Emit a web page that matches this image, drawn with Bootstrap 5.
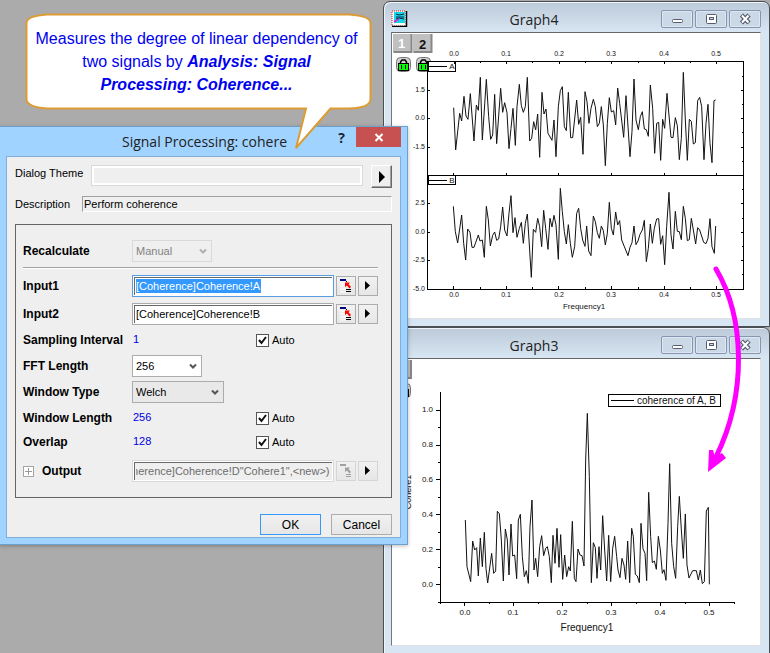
<!DOCTYPE html>
<html lang="en">
<head>
<meta charset="utf-8">
<meta name="viewport" content="width=device-width, initial-scale=1">
<title>Signal Processing: cohere</title>
<link href="https://cdn.jsdelivr.net/npm/bootstrap@5.3.0/dist/css/bootstrap.min.css" rel="stylesheet">
<style>
body{font-family:"Liberation Sans",Arial,sans-serif;font-size:11px;line-height:16px;color:#000;background:#ababab}
.desktop{min-height:100vh;background:#ababab}
.win-title{font-family:"Open Sans","Noto Sans",sans-serif;font-size:14px;line-height:20px;color:#222}
/* graph windows */
.graph-win{position:absolute;left:383px;right:0;border:1px solid #4a4f55;border-radius:7px 7px 0 0;background:linear-gradient(#bccad9,#d8e5f2 30px);padding:0 8px 7px 7px;box-shadow:inset 1px 1px 0 #eef4fa}
.win-one{top:1px}
.win-two{top:327px}
.graph-bar{height:30px;padding-top:8px;position:relative}
.graph-bar .win-title{left:0;right:0;padding-right:84px}
.bar-icon{width:17px;height:17px}
.cap-btn{width:32px;height:18px;padding:0;border:1px solid #8795b3;border-radius:2px;background:#cbd8e6;box-shadow:inset 0 0 0 1px #dde7f1;line-height:0}
.tight{gap:2px}
.client{border:1px solid #e2e2e2;border-top:1px solid #666;border-left:1px solid #777;background:#fff}
.client svg{display:block;width:100%;height:auto}
.plot text{font-family:"Liberation Sans",Arial,sans-serif;fill:#111}
.trace{fill:none;stroke:#111;stroke-width:3;stroke-linejoin:round}
.axis{fill:none;stroke:#000;stroke-width:1;shape-rendering:crispEdges}
/* dialog */
.dialog-win{position:absolute;left:-1px;top:126px;width:409px;background:#a0d3ff;border:1px solid #6f9fcb;padding:0 6px 6px;box-shadow:0 1px 4px #0004}
.dialog-bar{height:29px}
.dialog-bar .win-title{padding:5px 40px 0 0}
.help-btn{border:0;background:none;padding:0;width:29px;height:22px;font:bold 14px/22px "Open Sans",sans-serif;color:#1c2733}
.close-btn{border:0;background:#c75050;padding:0;width:45px;height:20px;line-height:0}
.dialog-body{background:#efefef;border:1px solid #80aed8;padding:8px 8px 2px}
.theme-box{width:272px;height:21px;border:1px solid #d9d9d9;background:#efefef;box-shadow:inset 0 0 0 2px #fff;padding:0 4px}
.theme-btn{width:21px;height:23px;padding:0;border:1px solid #fff;border-right-color:#696969;border-bottom-color:#696969;background:#efefef;box-shadow:inset -1px -1px 0 #a0a0a0;line-height:0}
.desc-box{height:16px;border:1px solid #a0a0a0;border-right-color:#fff;border-bottom-color:#fff;background:#efefef;padding:0 1px}
.params{border:1px solid #646464;padding:15px 13px 15px 7px;margin-top:12px}
.param-row{min-height:22px}
.name-col{width:109px;flex:none;font-weight:bold;font-size:12px}
.split{height:2px;background:#a0a0a0;border-bottom:1px solid #fff;margin:5px 0 6px}
.range-row{gap:2px;margin-bottom:6px}
.range-row .name-col{width:107px}
.range-box{flex:1;min-width:0;height:22px;border:1px solid #ababab;padding:0 3px;background:#fff;box-shadow:inset 0 0 0 1px #fff,inset 2px 2px 0 #696969}
.range-box.picked{border-color:#569de5;color:#fff;background:linear-gradient(#3399ff,#3399ff) 3px 3px/125px 14px no-repeat #fff}
.range-box.off{border-color:#d9d9d9;color:#6d6d6d;background:#efefef}
.tool-btn{width:20px;height:20px;padding:0;border:1px solid #acacac;background:linear-gradient(#f1f1f1,#e6e6e6);line-height:0;flex:none}
.tool-btn.off{border-color:#d5d5d5}
.pick{appearance:none;height:22px;border:1px solid #acacac;color:#000;padding:0 18px 0 3px;background:url("data:image/svg+xml,%3Csvg xmlns='http://www.w3.org/2000/svg' width='8' height='7'%3E%3Cpath d='M1 1.5l3 3 3-3' fill='none' stroke='%23555' stroke-width='2'/%3E%3C/svg%3E") no-repeat right 4px center #fff}
.pick.gray{background-color:#e9e9e9;width:92px}
.pick.short{width:70px}
.pick:disabled{width:80px;border-color:#d9d9d9;color:#838383;background-color:#efefef;opacity:1;background-image:url("data:image/svg+xml,%3Csvg xmlns='http://www.w3.org/2000/svg' width='8' height='7'%3E%3Cpath d='M1 1.5l3 3 3-3' fill='none' stroke='%23b0b0b0' stroke-width='2'/%3E%3C/svg%3E")}
.value-col{width:124px;color:#0000e0;line-height:20px;padding-left:1px;height:22px}
.tick{appearance:none;width:13px;height:13px;border:1px solid #555;background:#fff;margin:0 3px 0 0}
.tick:checked{background:url("data:image/svg+xml,%3Csvg xmlns='http://www.w3.org/2000/svg' width='11' height='11'%3E%3Cpath d='M2 5l2.500 3 4.500-6' fill='none' stroke='%23111' stroke-width='2'/%3E%3C/svg%3E") center no-repeat #fff}
.expand-btn{width:11px;height:11px;padding:0;border:1px solid #a5a5a5;background:#fff;line-height:0}
.overlap-row{margin:2px 0 7px}
.end-btns{gap:10px;padding-top:16px;padding-bottom:0}
.end-btn{width:61px;height:21px;padding:0;border:1px solid #acacac;background:linear-gradient(#f1f1f1,#e6e6e6);font-size:12px;line-height:18px;color:#000}
.end-btn.main{border-color:#3399ff}
/* overlays */
.callout{position:absolute;left:25px;top:13px;width:347px;height:137px;padding:14px 8px 0 4px;color:#0000f0;font-size:16px;line-height:23px;z-index:3}
.callout svg{position:absolute;left:0;top:0;z-index:-1}
.flow-arrow{position:absolute;left:700px;top:260px;z-index:3;pointer-events:none}
</style>
<script src="https://cdn.jsdelivr.net/npm/bootstrap@5.3.0/dist/js/bootstrap.bundle.min.js"></script>
</head>
<body>
<svg width="0" height="0" class="position-absolute" aria-hidden="true">
  <defs>
    <g id="g-min"><rect x="10.500" y="8.500" width="10" height="3" rx="1" fill="#fff" stroke="#555b70"/></g>
    <g id="g-max"><rect x="10.500" y="3.500" width="10" height="9" rx="1" fill="#fff" stroke="#555b70"/><rect x="13.500" y="6.500" width="4" height="2" fill="#cbd8e6" stroke="#555b70"/></g>
    <g id="g-close"><path d="M11.500 4l7.500 8M19 4l-7.500 8" stroke="#555b70" stroke-width="4.500"/><path d="M12 4.500l6.500 7M18.500 4.500l-6.500 7" stroke="#fff" stroke-width="2"/></g>
    <g id="g-play"><path d="M6 4v9l5-4.500z"/></g>
    <g id="g-lock"><rect x=".5" y=".5" width="14" height="14" rx="4" fill="#d0d0d0" stroke="#777"/><path d="M4.500 7V5l1.500-2h3l1.500 2v2" fill="none" stroke="#000" stroke-width="1.500"/><rect x="2.500" y="6.500" width="10" height="7" fill="#0f0" stroke="#000"/><path d="M5.500 8v4M9.500 8v4" stroke="#000"/></g>
    <g id="g-pick"><path d="M3 2h6v2H3z" fill="#000080"/><path d="M3 6h6M3 9h6M3 12h6M3 15h6" stroke="#fff"/><path d="M9 4.500h1" stroke="#000"/><path d="M8 5.500h5L11.500 7l2.500 3-1.500 1.500L10 8.500 8 10z" fill="#f00"/><path d="M9 12.500h5M9 14.500h5" stroke="#000"/></g>
    <g id="g-pick-off"><path d="M3 2h6v2H3z"/><path d="M8 5.500h5L11.500 7l2.500 3-1.500 1.500L10 8.500 8 10z"/><path d="M9 12.500h5M9 14.500h5" stroke="#a0a0a0"/></g>
  </defs>
</svg>
<main class="desktop position-relative overflow-hidden">

<section class="graph-win win-one">
  <header class="graph-bar d-flex justify-content-between align-items-start">
    <svg class="bar-icon" viewBox="0 0 17 17"><path d="M1 1h14v15H1z" fill="#fff" stroke="#c22" stroke-dasharray="1 1"/><path d="M3 2h11v11H3z" fill="#14d8e8"/><path d="M5 4l3 1 5-1M5 7h8M5 9l3-1 5 1" fill="none" stroke="#124"/><path d="M3 12l5-3" stroke="#d2c" stroke-width="1.500"/><path d="M15.500 1v15.500H1" fill="none" stroke="#000" stroke-width="1.500"/></svg>
    <span class="win-title position-absolute text-center pe-none">Graph4</span>
    <div class="d-flex tight position-relative">
      <button type="button" class="cap-btn" aria-label="Minimize"><svg width="30" height="16"><use href="#g-min"/></svg></button>
      <button type="button" class="cap-btn" aria-label="Restore"><svg width="30" height="16"><use href="#g-max"/></svg></button>
      <button type="button" class="cap-btn" aria-label="Close"><svg width="30" height="16"><use href="#g-close"/></svg></button>
    </div>
  </header>
  <div class="client">
  <svg class="plot" viewBox="392 33 368 285" role="img" aria-label="Signals A and B">
    <path d="M393 34h19v18h-19zM413 34h19v18h-19z" fill="#c0c0c0"/><path d="M411.500 34v18h-18M431.500 34v18h-18" fill="none" stroke="#888" stroke-width="2"/>
    <text x="398" y="48" font-size="13" font-weight="bold" style="fill:#fff">1</text><text x="419" y="49" font-size="13" font-weight="bold">2</text>
    <use href="#g-lock" x="396" y="57"/><use href="#g-lock" x="416" y="57"/>
    <rect x="428.500" y="61.500" width="27" height="10" fill="#fff" stroke="#000"/>
    <rect x="428.500" y="175.500" width="27" height="9" fill="#fff" stroke="#000"/>
    <path class="axis" d="M427.500 61.500H743.500V289.500H427.500zM427.500 175.500H743.500M429 66.500h18M429 180.500h18"/>
    <path class="axis" d="M454.500 62v2M480.500 62v1M506.500 62v2M532.500 62v1M559.500 62v2M585.500 62v1M611.500 62v2M638.500 62v1M664.500 62v2M690.500 62v1M716.500 62v2M453.500 175v-2M506.500 175v-2M558.500 175v-2M611.500 175v-2M664.500 175v-2M716.500 175v-2M453.500 289v-3M480.500 289v-2M506.500 289v-3M532.500 289v-2M558.500 289v-3M585.500 289v-2M611.500 289v-3M638.500 289v-2M664.500 289v-3M690.500 289v-2M716.500 289v-3"/>
    <path class="axis" d="M428 90.500h2M428 118.500h2M428 147.500h2M428 203.500h2M428 232.500h2M428 260.500h2M743 76.500h-1M743 90.500h-2M743 104.500h-1M743 118.500h-2M743 132.500h-1M743 147.500h-2M743 161.500h-1M743 189.500h-1M743 203.500h-2M743 218.500h-1M743 232.500h-2M743 246.500h-1M743 260.500h-2M743 274.500h-1"/>
    <g font-size="7" text-anchor="middle">
      <text x="454" y="56">0.0</text><text x="506" y="56">0.1</text><text x="559" y="56">0.2</text><text x="611" y="56">0.3</text><text x="664" y="56">0.4</text><text x="716" y="56">0.5</text>
      <text x="454" y="297">0.0</text><text x="506" y="297">0.1</text><text x="559" y="297">0.2</text><text x="611" y="297">0.3</text><text x="664" y="297">0.4</text><text x="716" y="297">0.5</text>
      <text x="452" y="69" font-size="8">A</text><text x="452" y="183" font-size="8">B</text>
      <text x="584" y="309" font-size="8">Frequency1</text>
    </g>
    <g font-size="7" text-anchor="end">
      <text x="425" y="92">1.5</text><text x="425" y="120">0.0</text><text x="425" y="149">-1.5</text>
      <text x="425" y="205">2.5</text><text x="425" y="234">0.0</text><text x="425" y="262">-2.5</text><text x="425" y="291">-5.0</text>
    </g>
    <g transform="translate(410 60) scale(.33333)"><polyline class="trace" points="131,143 137,270 149,160 155,183 162,109 168,168 174,178 181,101 192,243 199,135 205,151 211,52 217,240 229,58 236,170 242,238 248,225 254,103 260,251 272,85 278,157 284,128 291,158 297,266 303,205 309,145 316,256 321,140 328,73 334,137 340,157 346,140 352,52 359,243 365,235 371,185 377,210 383,162 389,292 396,97 402,162 408,147 414,220 426,241 432,180 438,290 445,140 451,92 457,80 463,200 469,212 475,97 482,233 488,233 500,120 506,193 512,172 519,283 525,95 531,125 537,190 543,145 550,118 556,140 562,200 568,190 574,140 580,195 586,317 592,190 598,113 604,156 611,152 617,195 623,84 629,130 641,232 648,107 660,290 666,215 672,57 678,180 685,209 691,170 697,155 703,207 709,209 715,229 721,75 728,145 734,280 740,190 746,187 752,301 758,178 764,205 771,100 783,232 789,233 796,173 802,197 808,299 814,235 820,37 826,180 832,301 838,178 844,184 850,252 856,248 863,122 869,112 875,140 882,299 888,190 894,133 900,250 906,308 912,122 917,120"/></g>
    <g transform="translate(400 170) scale(.33333)"><polyline class="trace" points="160,109 166,185 173,219 185,135 191,220 197,270 203,177 210,187 216,232 222,232 235,195 240,213 247,210 253,262 259,109 265,150 271,228 278,196 284,186 290,211 296,207 302,170 308,111 314,180 321,198 327,130 333,77 339,188 345,143 351,202 358,175 364,157 370,220 376,160 382,132 388,225 394,322 400,178 407,187 413,145 419,170 425,230 431,121 437,175 444,238 450,145 456,171 462,136 468,165 475,268 481,55 487,125 493,185 499,222 505,164 511,220 517,262 524,230 530,130 536,115 542,175 548,210 555,229 560,168 566,243 573,257 580,138 586,155 592,188 598,205 604,168 610,182 616,225 622,190 628,97 634,175 640,195 647,126 653,165 659,152 665,210 684,257 690,232 696,218 702,168 708,224 714,213 720,193 727,180 733,151 739,275 745,235 751,162 757,220 763,175 770,147 776,146 782,223 788,197 794,284 800,170 807,67 813,195 819,237 826,124 832,184 838,185 844,209 850,109 856,145 862,212 868,209 874,145 880,180 887,222 893,173 899,180 911,217 918,221 924,205 930,146 936,230 943,250 947,168"/></g>
  </svg>
  </div>
</section>

<section class="graph-win win-two">
  <header class="graph-bar d-flex justify-content-end align-items-start">
    <span class="win-title position-absolute text-center pe-none">Graph3</span>
    <div class="d-flex tight position-relative">
      <button type="button" class="cap-btn" aria-label="Minimize"><svg width="30" height="16"><use href="#g-min"/></svg></button>
      <button type="button" class="cap-btn" aria-label="Restore"><svg width="30" height="16"><use href="#g-max"/></svg></button>
      <button type="button" class="cap-btn" aria-label="Close"><svg width="30" height="16"><use href="#g-close"/></svg></button>
    </div>
  </header>
  <div class="client">
  <svg class="plot" viewBox="392 359 368 286" role="img" aria-label="Coherence of A and B">
    <path d="M393 360h19v18h-19z" fill="#c0c0c0"/><path d="M411 360v18h-18" fill="none" stroke="#888" stroke-width="2"/>
    <use href="#g-lock" x="396" y="383"/>
    <path class="axis" d="M440.500 392V602.500H735M440 410.500h-4M440 445.500h-4M440 479.500h-4M440 514.500h-4M440 549.500h-4M440 584.500h-4M440 427.500h-2M440 462.500h-2M440 497.500h-2M440 532.500h-2M440 567.500h-2M440 602.500h-2"/>
    <path class="axis" d="M440.500 602v2M464.500 602v4M489.500 602v2M513.500 602v4M538.500 602v2M562.500 602v4M587.500 602v2M611.500 602v4M636.500 602v2M660.500 602v4M685.500 602v2M709.500 602v4M734.500 602v2"/>
    <rect x="608.500" y="394.500" width="112" height="12" fill="#fff" stroke="#000"/><path class="axis" d="M611 400.500h23"/>
    <text x="637" y="404" font-size="10">coherence of A, B</text>
    <g font-size="8" text-anchor="middle">
      <text x="465" y="615">0.0</text><text x="513" y="615">0.1</text><text x="562" y="615">0.2</text><text x="611" y="615">0.3</text><text x="660" y="615">0.4</text><text x="709" y="615">0.5</text>
      <text x="587" y="631" font-size="10">Frequency1</text>
      <text transform="translate(411 492) rotate(-90)" font-size="9">Cohere1</text>
    </g>
    <g font-size="8" text-anchor="end">
      <text x="433" y="412">1.0</text><text x="433" y="447">0.8</text><text x="433" y="482">0.6</text><text x="433" y="517">0.4</text><text x="433" y="552">0.2</text><text x="433" y="587">0.0</text>
    </g>
    <g transform="translate(380 310) scale(.33333)"><polyline class="trace" points="256,630 261,770 272,815 278,693 284,720 290,713 295,798 301,684 307,770 313,667 318,775 323,819 335,730 341,790 347,783 352,604 358,611 364,690 370,813 376,657 382,690 387,795 393,642 398,738 404,735 410,806 415,630 421,613 427,740 433,800 439,782 445,820 450,650 456,570 462,780 467,745 473,800 479,710 485,677 491,737 497,715 502,710 508,740 514,818 519,676 525,760 531,655 537,772 542,674 548,808 554,735 560,800 566,770 571,783 577,634 583,805 588,815 594,717 600,735 606,737 612,768 617,450 622,310 628,500 634,818 640,698 646,713 651,805 657,710 662,780 668,617 674,720 680,813 686,676 692,815 698,715 704,679 710,740 714,780 720,803 726,745 732,765 737,808 743,693 749,818 755,655 760,680 766,793 772,798 778,818 783,640 789,716 795,730 800,812 806,547 812,680 817,758 823,753 829,778 835,679 841,720 847,790 852,779 858,811 864,640 869,461 875,700 881,770 887,805 893,650 898,559 904,660 910,745 916,612 921,765 927,804 938,782 949,782 955,810 961,780 967,821 973,815 979,603 985,592 988,823"/></g>
  </svg>
  </div>
</section>

<section class="dialog-win" role="dialog" aria-labelledby="dlg-title">
  <header class="dialog-bar d-flex align-items-start">
    <span id="dlg-title" class="win-title flex-fill text-end">Signal Processing: cohere</span>
    <button type="button" class="help-btn" aria-label="Help">?</button>
    <button type="button" class="close-btn" aria-label="Close"><svg width="45" height="20"><path d="M19.500 7l7 7M26.500 7l-7 7" stroke="#fff" stroke-width="2"/></svg></button>
  </header>
  <form class="dialog-body">
    <div class="d-flex align-items-start">
      <label for="theme" class="flex-fill">Dialog Theme</label>
      <input id="theme" class="theme-box me-2" readonly>
      <button type="button" class="theme-btn" aria-label="Theme menu"><svg width="19" height="21"><path d="M7 5v12l6-6z"/></svg></button>
    </div>
    <div class="d-flex align-items-center mt-2">
      <label for="desc" class="pe-2 me-1">Description</label>
      <input id="desc" class="desc-box flex-fill" value="Perform coherence" readonly>
    </div>
    <div class="params">
      <div class="param-row d-flex align-items-center">
        <label class="name-col" for="recalc">Recalculate</label>
        <select id="recalc" class="pick" disabled><option>Manual</option></select>
      </div>
      <div class="split"></div>
      <div class="param-row range-row d-flex align-items-center">
        <label class="name-col" for="in1">Input1</label>
        <input id="in1" class="range-box picked" value="[Coherence]Coherence!A">
        <button type="button" class="tool-btn" aria-label="Select Input1 range"><svg width="18" height="18"><use href="#g-pick"/></svg></button>
        <button type="button" class="tool-btn" aria-label="Input1 menu"><svg width="18" height="18"><use href="#g-play"/></svg></button>
      </div>
      <div class="param-row range-row d-flex align-items-center mb-0">
        <label class="name-col" for="in2">Input2</label>
        <input id="in2" class="range-box" value="[Coherence]Coherence!B">
        <button type="button" class="tool-btn" aria-label="Select Input2 range"><svg width="18" height="18"><use href="#g-pick"/></svg></button>
        <button type="button" class="tool-btn" aria-label="Input2 menu"><svg width="18" height="18"><use href="#g-play"/></svg></button>
      </div>
      <div class="param-row d-flex align-items-center mt-1">
        <span class="name-col">Sampling Interval</span><span class="value-col">1</span>
        <input id="a1" type="checkbox" class="tick" checked><label for="a1">Auto</label>
      </div>
      <div class="param-row d-flex align-items-center mt-1">
        <label class="name-col" for="fft">FFT Length</label>
        <select id="fft" class="pick short"><option>256</option></select>
      </div>
      <div class="param-row d-flex align-items-center mt-1">
        <label class="name-col" for="wtype">Window Type</label>
        <select id="wtype" class="pick gray"><option>Welch</option></select>
      </div>
      <div class="param-row d-flex align-items-center mt-1">
        <span class="name-col">Window Length</span><span class="value-col">256</span>
        <input id="a2" type="checkbox" class="tick" checked><label for="a2">Auto</label>
      </div>
      <div class="param-row overlap-row d-flex align-items-center">
        <span class="name-col">Overlap</span><span class="value-col">128</span>
        <input id="a3" type="checkbox" class="tick" checked><label for="a3">Auto</label>
      </div>
      <div class="param-row range-row d-flex align-items-center mb-0">
        <div class="name-col d-flex align-items-center">
          <button type="button" class="expand-btn me-1" aria-label="Expand output"><svg width="9" height="9"><path d="M1 4.500h7M4.500 1v7" stroke="#999"/></svg></button>
          <label for="out" class="ps-1">Output</label>
        </div>
        <input id="out" class="range-box off" value='oherence]Coherence!D"Cohere1",&lt;new&gt;)' readonly>
        <button type="button" class="tool-btn off" aria-label="Select output range" disabled><svg width="18" height="18" fill="#a0a0a0"><use href="#g-pick-off"/></svg></button>
        <button type="button" class="tool-btn off" aria-label="Output menu"><svg width="18" height="18"><use href="#g-play"/></svg></button>
      </div>
    </div>
    <div class="end-btns d-flex justify-content-end">
      <button type="button" class="end-btn main">OK</button>
      <button type="button" class="end-btn">Cancel</button>
    </div>
  </form>
</section>

<aside class="callout text-center">
  <svg width="347" height="137" aria-hidden="true"><path d="M22 1.500H324Q345.500 3 345.500 10V86Q345.500 95 324 95.500H305.500L271 135 281 95.500H22Q1.500 94 1.500 86V10Q1.500 3 22 1.500z" fill="#fff" stroke="#dd9c32" stroke-width="2"/></svg>
  Measures the degree of linear dependency of<br>two signals by <b><i>Analysis: Signal<br>Processing: Coherence...</i></b>
</aside>

<svg class="flow-arrow" width="50" height="220" aria-hidden="true"><path d="M16 9C45 58 47 134 16 197" fill="none" stroke="#f0f" stroke-width="5" stroke-linecap="round"/><path d="M8 212L9 190H13L15 197 22 193 26 198z" fill="#f0f"/></svg>
</main>
<script>
  // Show the end of the long output range
  const out = document.getElementById('out');
  out.scrollLeft = out.scrollWidth;
</script>
</body>
</html>
